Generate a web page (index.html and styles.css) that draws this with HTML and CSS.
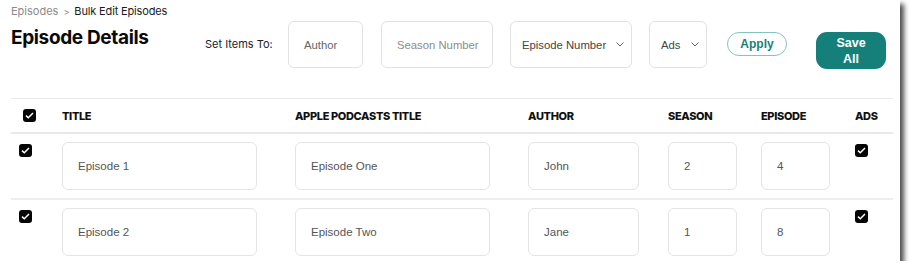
FILE: index.html
```html
<!DOCTYPE html>
<html>
<head>
<meta charset="utf-8">
<link rel="stylesheet" href="styles.css">
</head>
<body>
<div class="frame">
  <div class="header">
    <div class="title-block">
      <div class="crumbs"><span class="crumb-link">Episodes</span><span class="crumb-sep">&gt;</span><span class="crumb-cur">Bulk Edit Episodes</span></div>
      <h1>Episode Details</h1>
    </div>
    <div class="controls">
      <div class="set-label">Set Items To:</div>
      <div class="field f-author ph-dark">Author</div>
      <div class="field f-season ph-light">Season Number</div>
      <div class="field select f-episode"><span>Episode Number</span><svg class="chev" width="8" height="5" viewBox="0 0 8 5"><path d="M0.5 0.5 L4 4 L7.5 0.5" fill="none" stroke="#666" stroke-width="1"/></svg></div>
      <div class="field select f-ads"><span>Ads</span><svg class="chev" width="8" height="5" viewBox="0 0 8 5"><path d="M0.5 0.5 L4 4 L7.5 0.5" fill="none" stroke="#666" stroke-width="1"/></svg></div>
      <button class="btn-apply">Apply</button>
      <button class="btn-save">Save<br>All</button>
    </div>
  </div>

  <div class="table">
    <div class="row head">
      <div class="cell"><span class="check check-head"><svg width="9" height="7" viewBox="0 0 9 7"><path d="M1 3.6 L3.3 5.8 L8 1" fill="none" stroke="#fff" stroke-width="1.5"/></svg></span></div>
      <div class="cell th">TITLE</div>
      <div class="cell th">APPLE PODCASTS TITLE</div>
      <div class="cell th">AUTHOR</div>
      <div class="cell th">SEASON</div>
      <div class="cell th">EPISODE</div>
      <div class="cell th">ADS</div>
    </div>
    <div class="row body">
      <div class="cell"><span class="check check-row"><svg width="9" height="7" viewBox="0 0 9 7"><path d="M1 3.6 L3.3 5.8 L8 1" fill="none" stroke="#fff" stroke-width="1.5"/></svg></span></div>
      <div class="cell"><div class="input w-title">Episode 1</div></div>
      <div class="cell"><div class="input w-title">Episode One</div></div>
      <div class="cell"><div class="input w-author">John</div></div>
      <div class="cell"><div class="input w-num">2</div></div>
      <div class="cell"><div class="input w-num">4</div></div>
      <div class="cell"><span class="check check-ads"><svg width="9" height="7" viewBox="0 0 9 7"><path d="M1 3.6 L3.3 5.8 L8 1" fill="none" stroke="#fff" stroke-width="1.5"/></svg></span></div>
    </div>
    <div class="row body">
      <div class="cell"><span class="check check-row"><svg width="9" height="7" viewBox="0 0 9 7"><path d="M1 3.6 L3.3 5.8 L8 1" fill="none" stroke="#fff" stroke-width="1.5"/></svg></span></div>
      <div class="cell"><div class="input w-title">Episode 2</div></div>
      <div class="cell"><div class="input w-title">Episode Two</div></div>
      <div class="cell"><div class="input w-author">Jane</div></div>
      <div class="cell"><div class="input w-num">1</div></div>
      <div class="cell"><div class="input w-num">8</div></div>
      <div class="cell"><span class="check check-ads"><svg width="9" height="7" viewBox="0 0 9 7"><path d="M1 3.6 L3.3 5.8 L8 1" fill="none" stroke="#fff" stroke-width="1.5"/></svg></span></div>
    </div>
  </div>
</div>
</body>
</html>
```

FILE: styles.css
```css
* { box-sizing: border-box; }
html, body { margin: 0; padding: 0; background: #fff; }
body { font-family: Inter, "Liberation Sans", sans-serif; color: #111; }

.frame {
  width: 900px;
  height: 261px;
  background: #fff;
  overflow: hidden;
  box-shadow: 4px 4px 5px rgba(0, 0, 0, 0.7);
}

.header {
  display: flex;
  align-items: flex-start;
  height: 98px;
  padding-left: 11px;
}

.title-block { width: 194px; }

.crumbs {
  margin-top: 3px;
  font-size: 11px;
  line-height: 16px;
  white-space: nowrap;
}
.crumb-link { color: #8a8a8a; }
.crumb-sep { color: #8a8a8a; font-size: 9px; margin: 0 5px 0 5px; }
.crumb-cur { color: #1a1a1a; letter-spacing: -0.15px; }

h1 {
  margin: 6px 0 0;
  font-size: 19px;
  line-height: 24px;
  font-weight: 700;
  letter-spacing: -0.35px;
  color: #0a0a0a;
  white-space: nowrap;
}

.controls {
  display: flex;
  align-items: flex-start;
  margin-top: 21px;
}

.set-label {
  width: 83px;
  font-size: 11px;
  line-height: 47px;
  color: #222;
  white-space: nowrap;
}

.field {
  height: 47px;
  border: 1px solid #e2e2e2;
  border-radius: 6px;
  font-family: "Liberation Sans", Arial, sans-serif;
  font-size: 11.3px;
  display: flex;
  align-items: center;
  padding-left: 15px;
  white-space: nowrap;
}
.ph-dark { color: #666; }
.ph-light { color: #8d8d8d; }
.f-author { width: 75px; margin-right: 18px; }
.f-season { width: 112px; margin-right: 17px; }
.select { color: #444; padding-left: 11px; padding-right: 7px; justify-content: space-between; }
.f-episode { width: 122px; margin-right: 17px; }
.f-ads { width: 58px; margin-right: 20px; }
.chev { flex: none; }

.btn-apply {
  margin-top: 11px;
  margin-right: 29px;
  width: 60px;
  height: 24px;
  border: 1px solid #86c3bf;
  border-radius: 12px;
  background: #fff;
  color: #16807b;
  font-family: "Liberation Sans", Arial, sans-serif;
  font-weight: 700;
  font-size: 12px;
  padding: 0;
}

.btn-save {
  margin-top: 11px;
  width: 70px;
  height: 37px;
  border: none;
  border-radius: 11px;
  background: #157f7a;
  color: #fff;
  font-family: "Liberation Sans", Arial, sans-serif;
  font-weight: 700;
  font-size: 12.5px;
  line-height: 16px;
  padding: 0;
}

.table {
  margin-left: 11px;
  width: 882px;
}

.row {
  display: grid;
  grid-template-columns: 51px 233px 233px 140px 93px 94px 38px;
}
.row.head {
  height: 36px;
  border-top: 1px solid #ececec;
  border-bottom: 2px solid #e9e9e9;
  align-items: center;
}
.row.body {
  height: 66px;
  padding-top: 8px;
  border-bottom: 2px solid #eeeeee;
  align-items: start;
}

.th {
  font-size: 11px;
  font-weight: 800;
  color: #111;
  letter-spacing: -0.35px;
  white-space: nowrap;
}

.check {
  display: flex;
  align-items: center;
  justify-content: center;
  width: 13px;
  height: 13px;
  background: #050505;
  border-radius: 3px;
}
.check-head { margin-left: 12px; }
.check-row { margin-left: 8px; margin-top: 2px; }
.check-ads { margin-top: 2px; }

.input {
  height: 48px;
  border: 1px solid #e4e4e4;
  border-radius: 6px;
  font-family: "Liberation Sans", Arial, sans-serif;
  font-size: 11.5px;
  color: #555;
  display: flex;
  align-items: center;
  padding-left: 15px;
}
.w-title { width: 195px; }
.w-author { width: 111px; }
.w-num { width: 69px; }
```
